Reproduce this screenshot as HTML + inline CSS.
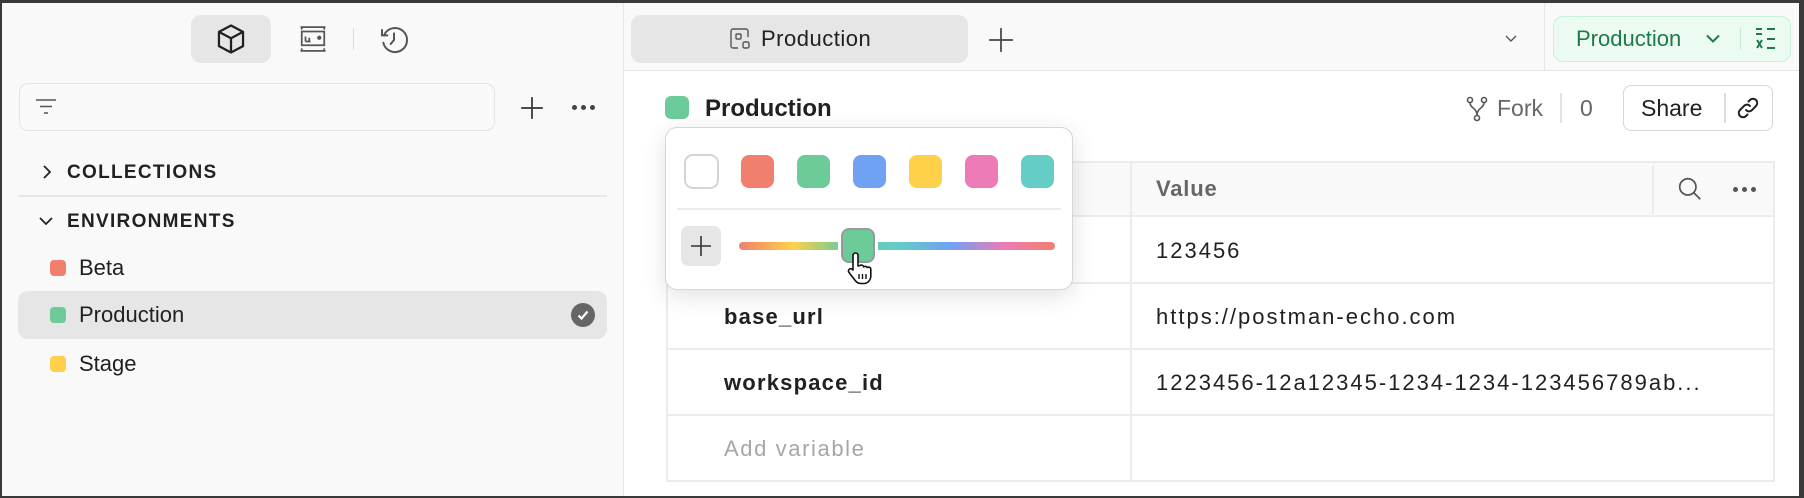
<!DOCTYPE html>
<html><head><meta charset="utf-8"><style>
*{box-sizing:border-box;margin:0;padding:0}
body{width:1804px;height:498px;overflow:hidden;font-family:"Liberation Sans",sans-serif;color:#212121;background:#fff;position:relative}
.a{position:absolute}
.t{position:absolute;white-space:nowrap;line-height:1}
.d{position:absolute;width:5px;height:5px;border-radius:50%;background:#555}
.v{letter-spacing:2px}
.k{letter-spacing:1.2px}
</style></head><body>
<div class="a" style="left:0;top:0;width:1804px;height:498px;border:2px solid #3a3a3a;border-right-width:5px;border-top-width:3px"></div>
<!-- sidebar -->
<div class="a" style="left:2px;top:3px;width:622px;height:493px;background:#f9f9f9;border-right:1px solid #e6e6e6"></div>
<div class="a" style="left:624px;top:3px;width:1175px;height:68px;background:#f9f9f9;border-bottom:1px solid #e6e6e6"></div>
<div class="a" style="left:191px;top:15px;width:80px;height:48px;background:#e6e6e6;border-radius:10px"></div>
<svg class="a" style="left:214px;top:22px" width="34" height="34" viewBox="0 0 24 24" fill="none" stroke="#212121" stroke-width="1.6" stroke-linejoin="round"><path d="M12 2.5 20.5 7v10L12 21.5 3.5 17V7z"/><path d="M3.5 7 12 11.5 20.5 7M12 11.5v10"/></svg>
<svg class="a" style="left:298px;top:24px" width="30" height="30" viewBox="0 0 24 24" fill="none" stroke="#555" stroke-width="1.4"><path d="M2 2.5h20M2 21.5h20M3 2.5v2M21 2.5v2M3 21.5v-2M21 21.5v-2"/><rect x="3" y="6" width="18" height="11"/><path d="M6 14v-4M9 14v-3M6 14h4"/><circle cx="17" cy="11" r="1" fill="#555"/></svg>
<div class="a" style="left:353px;top:28px;width:1px;height:22px;background:#ddd"></div>
<svg class="a" style="left:378px;top:24px" width="32" height="32" viewBox="0 0 24 24" fill="none" stroke="#555" stroke-width="1.5" stroke-linecap="round"><path d="M4.5 8.5A9 9 0 1 1 4 14"/><path d="M3 4.5v4h4"/><path d="M12 7v5l-2.5 3"/></svg>
<div class="a" style="left:19px;top:83px;width:476px;height:48px;border:1px solid #e3e3e3;border-radius:9px;background:#f9f9f9"></div>
<svg class="a" style="left:34px;top:97px" width="24" height="20" viewBox="0 0 24 20" stroke="#555" stroke-width="1.5"><path d="M2 3h20M6 9.5h12M10 16h4"/></svg>
<svg class="a" style="left:519px;top:95px" width="26" height="26" viewBox="0 0 24 24" stroke="#333" stroke-width="1.6"><path d="M12 2v20M2 12h20"/></svg>
<div class="d" style="left:572px;top:105px;background:#444"></div><div class="d" style="left:581px;top:105px;background:#444"></div><div class="d" style="left:590px;top:105px;background:#444"></div>
<svg class="a" style="left:40px;top:164px" width="14" height="16" viewBox="0 0 14 16" fill="none" stroke="#222" stroke-width="1.8"><path d="M4 2l6 6-6 6"/></svg>
<div class="t" style="left:67px;top:163px;font-size:19px;font-weight:bold;letter-spacing:1.3px">COLLECTIONS</div>
<div class="a" style="left:18px;top:195px;width:589px;height:2px;background:#e8e8e8"></div>
<svg class="a" style="left:38px;top:214px" width="16" height="14" viewBox="0 0 16 14" fill="none" stroke="#222" stroke-width="1.8"><path d="M2 4l6 6 6-6"/></svg>
<div class="t" style="left:67px;top:212px;font-size:19px;font-weight:bold;letter-spacing:1.3px">ENVIRONMENTS</div>
<div class="a" style="left:50px;top:260px;width:16px;height:16px;border-radius:4px;background:#f07f6e"></div>
<div class="t" style="left:79px;top:257px;font-size:22px">Beta</div>
<div class="a" style="left:18px;top:291px;width:589px;height:48px;border-radius:10px;background:#e6e6e6"></div>
<div class="a" style="left:50px;top:307px;width:16px;height:16px;border-radius:4px;background:#6ccb98"></div>
<div class="t" style="left:79px;top:304px;font-size:22px">Production</div>
<div class="a" style="left:571px;top:303px;width:24px;height:24px;border-radius:50%;background:#666"></div>
<svg class="a" style="left:575px;top:307px" width="16" height="16" viewBox="0 0 16 16" fill="none" stroke="#fff" stroke-width="2.2"><path d="M3.5 8.5l3 3 6-7"/></svg>
<div class="a" style="left:50px;top:356px;width:16px;height:16px;border-radius:4px;background:#ffd14a"></div>
<div class="t" style="left:79px;top:353px;font-size:22px">Stage</div>
<!-- tabs -->
<div class="a" style="left:631px;top:15px;width:337px;height:48px;border-radius:10px;background:#e6e6e6"></div>
<svg class="a" style="left:729px;top:27px" width="24" height="24" viewBox="0 0 24 24" fill="none" stroke="#555" stroke-width="1.4"><path d="M9 21H4a2 2 0 0 1-2-2V4a2 2 0 0 1 2-2h13a2 2 0 0 1 2 2v6"/><rect x="7" y="7" width="5" height="5" rx="1"/><rect x="14" y="15" width="6" height="6" rx="1.5"/></svg>
<div class="t" style="left:761px;top:28px;font-size:22px;letter-spacing:0.5px">Production</div>
<svg class="a" style="left:988px;top:27px" width="26" height="26" viewBox="0 0 24 24" stroke="#444" stroke-width="1.6"><path d="M12 1v22M1 12h22"/></svg>
<svg class="a" style="left:1504px;top:33px" width="14" height="12" viewBox="0 0 14 12" fill="none" stroke="#555" stroke-width="1.4"><path d="M2 3l5 5 5-5"/></svg>
<div class="a" style="left:1544px;top:3px;width:1px;height:68px;background:#e6e6e6"></div>
<div class="a" style="left:1553px;top:16px;width:238px;height:46px;border-radius:10px;background:#ebfbf2;border:1.5px solid #c9f0da"></div>
<div class="t" style="left:1576px;top:28px;font-size:22px;color:#1f7a48">Production</div>
<svg class="a" style="left:1704px;top:32px" width="18" height="14" viewBox="0 0 18 14" fill="none" stroke="#1f7a48" stroke-width="2"><path d="M3 3.5l6 6 6-6"/></svg>
<div class="a" style="left:1740px;top:28px;width:1px;height:22px;background:#c9e8d4"></div>
<svg class="a" style="left:1754px;top:27px" width="24" height="24" viewBox="0 0 24 24" fill="none" stroke="#1f7a48" stroke-width="2"><path d="M2 2h6M2 7h6M13 2h8M13 12h8M13 21h8M3 13l5 8M8 13l-5 8"/></svg>
<!-- heading -->
<div class="a" style="left:665px;top:96px;width:24px;height:23px;border-radius:6px;background:#6ccb98"></div>
<div class="t" style="left:705px;top:97px;font-size:24px;font-weight:bold">Production</div>
<svg class="a" style="left:1465px;top:96px" width="24" height="26" viewBox="0 0 24 26" fill="none" stroke="#555" stroke-width="1.6"><circle cx="5" cy="4" r="2.5"/><circle cx="19" cy="4" r="2.5"/><circle cx="12" cy="22" r="2.5"/><path d="M5 6.5c0 6 7 5 7 13M19 6.5c0 6-7 5-7 13"/></svg>
<div class="t" style="left:1497px;top:97px;font-size:23px;color:#666">Fork</div>
<div class="a" style="left:1560px;top:93px;width:2px;height:30px;background:#e3e3e3"></div>
<div class="t" style="left:1580px;top:97px;font-size:23px;color:#666">0</div>
<div class="a" style="left:1623px;top:85px;width:150px;height:46px;border-radius:8px;border:1.5px solid #d6d6d6;background:#fff"></div>
<div class="t" style="left:1641px;top:97px;font-size:23px">Share</div>
<div class="a" style="left:1724px;top:93px;width:2px;height:30px;background:#ddd"></div>
<svg class="a" style="left:1736px;top:96px" width="24" height="24" viewBox="0 0 24 24" fill="none" stroke="#222" stroke-width="2" stroke-linecap="round"><path d="M10 14a4 4 0 0 0 6 0l4-4a4 4 0 0 0-6-6l-1.5 1.5"/><path d="M14 10a4 4 0 0 0-6 0l-4 4a4 4 0 0 0 6 6l1.5-1.5"/></svg>
<!-- table -->
<div class="a" style="left:666px;top:161px;width:1109px;height:321px;border:2px solid #ececec;background:#fff"></div>
<div class="a" style="left:668px;top:163px;width:1105px;height:54px;background:#f9f9f9;border-bottom:2px solid #ececec"></div>
<div class="a" style="left:1130px;top:163px;width:2px;height:317px;background:#ececec"></div>
<div class="a" style="left:1652px;top:166px;width:2px;height:48px;background:#ececec"></div>
<div class="t" style="left:1156px;top:178px;font-size:22px;font-weight:bold;color:#666;letter-spacing:0.8px">Value</div>
<svg class="a" style="left:1677px;top:176px" width="26" height="26" viewBox="0 0 24 24" fill="none" stroke="#555" stroke-width="1.6"><circle cx="10" cy="10" r="7.5"/><path d="M15.5 15.5l6 6"/></svg>
<div class="d" style="left:1733px;top:187px"></div><div class="d" style="left:1742px;top:187px"></div><div class="d" style="left:1751px;top:187px"></div>
<div class="a" style="left:668px;top:282px;width:1105px;height:2px;background:#ececec"></div>
<div class="a" style="left:668px;top:348px;width:1105px;height:2px;background:#ececec"></div>
<div class="a" style="left:668px;top:414px;width:1105px;height:2px;background:#ececec"></div>
<div class="t v" style="left:1156px;top:240px;font-size:22px">123456</div>
<div class="t k" style="left:724px;top:306px;font-size:22px;font-weight:bold">base_url</div>
<div class="t v" style="left:1156px;top:306px;font-size:22px">https://postman-echo.com</div>
<div class="t k" style="left:724px;top:372px;font-size:22px;font-weight:bold">workspace_id</div>
<div class="t v" style="left:1156px;top:372px;font-size:22px">1223456-12a12345-1234-1234-123456789ab...</div>
<div class="t" style="left:724px;top:438px;font-size:22px;color:#a6a6a6;letter-spacing:1.6px">Add variable</div>
<!-- popover -->
<div class="a" style="left:665px;top:127px;width:408px;height:163px;border-radius:12px;background:#fff;border:1.5px solid #d6d6d6;box-shadow:0 6px 24px rgba(0,0,0,.12)"></div>
<div class="a" style="left:684px;top:154px;width:35px;height:35px;border-radius:9px;border:2px solid #d4d4d4;background:#fff"></div>
<div class="a" style="left:741px;top:155px;width:33px;height:33px;border-radius:8px;background:#f07f6e"></div>
<div class="a" style="left:797px;top:155px;width:33px;height:33px;border-radius:8px;background:#6ccb98"></div>
<div class="a" style="left:853px;top:155px;width:33px;height:33px;border-radius:8px;background:#71a1f2"></div>
<div class="a" style="left:909px;top:155px;width:33px;height:33px;border-radius:8px;background:#ffd14a"></div>
<div class="a" style="left:965px;top:155px;width:33px;height:33px;border-radius:8px;background:#ec7bb7"></div>
<div class="a" style="left:1021px;top:155px;width:33px;height:33px;border-radius:8px;background:#64cdc6"></div>
<div class="a" style="left:677px;top:208px;width:384px;height:2px;background:#ececec"></div>
<div class="a" style="left:681px;top:226px;width:40px;height:40px;border-radius:7px;background:#e6e6e6"></div>
<svg class="a" style="left:689px;top:234px" width="24" height="24" viewBox="0 0 24 24" stroke="#333" stroke-width="1.6"><path d="M12 2v20M2 12h20"/></svg>
<div class="a" style="left:739px;top:242px;width:316px;height:8px;border-radius:4px;background:linear-gradient(90deg,#f07f6e 0%,#ffd14a 17%,#6ccb98 33%,#64cdc6 50%,#71a1f2 67%,#ec7bb7 84%,#f07f6e 100%)"></div>
<div class="a" style="left:838px;top:225px;width:40px;height:41px;border-radius:10px;background:#fff"></div>
<div class="a" style="left:841px;top:228px;width:34px;height:35px;border-radius:8px;background:#6ccb98;border:2px solid #999"></div>
<svg class="a" style="left:846px;top:252px" width="30" height="34" viewBox="0 0 30 34"><path d="M7 3.5a2.5 2.5 0 0 1 5 0V14l2-.5a2.3 2.3 0 0 1 3.5 1l.2.4a2.3 2.3 0 0 1 3.5.6 2.3 2.3 0 0 1 3.6 1.5V24c0 4-3 7.5-7 7.5h-3c-2.5 0-4.3-1.2-5.6-3L3 20.5a2.3 2.3 0 0 1 3.5-3L7 18z" fill="#fff" stroke="#111" stroke-width="1.6" stroke-linejoin="round"/><path d="M13 22v5M16.5 22v5M20 22v5" stroke="#111" stroke-width="1.4"/></svg>
</body></html>
